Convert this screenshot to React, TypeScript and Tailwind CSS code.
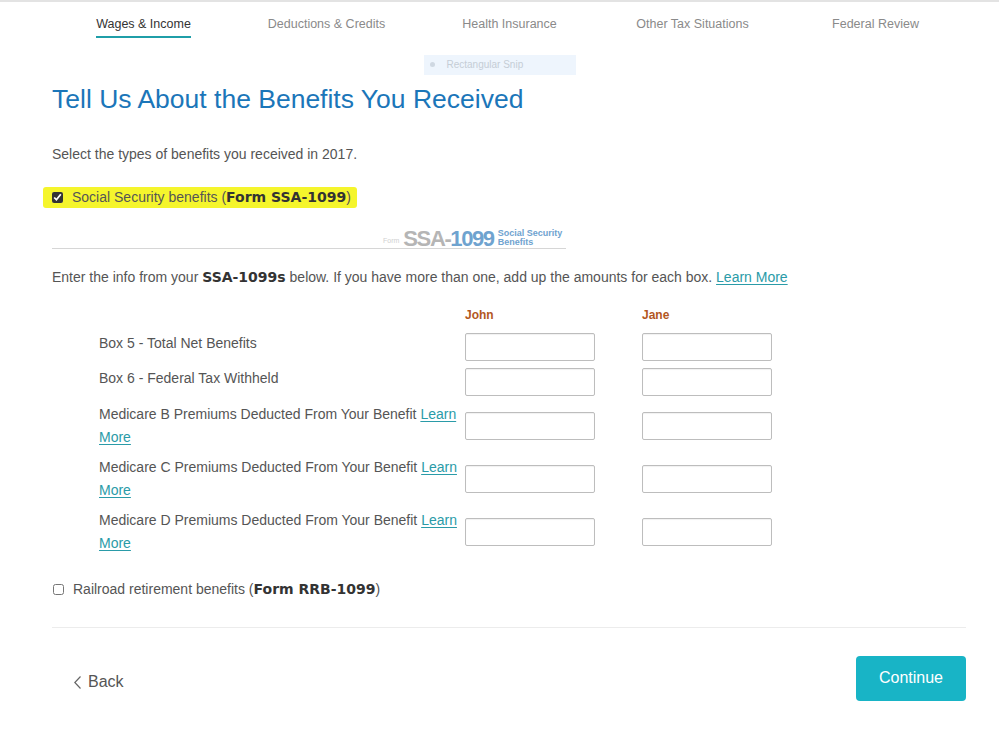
const tabs = ["Wages & Income", "Deductions & Credits", "Health Insurance", "Other Tax Situations", "Federal Review"];

type Row = { label: string; learn?: boolean };

const rows: Row[] = [
  { label: "Box 5 - Total Net Benefits" },
  { label: "Box 6 - Federal Tax Withheld" },
  { label: "Medicare B Premiums Deducted From Your Benefit", learn: true },
  { label: "Medicare C Premiums Deducted From Your Benefit", learn: true },
  { label: "Medicare D Premiums Deducted From Your Benefit", learn: true },
];

function LearnMore() {
  return <a className="text-[#2a9ba8] underline underline-offset-2" href="#">Learn More</a>;
}

function Box() {
  return <input className="h-[28px] w-[130px] rounded-[2px] border border-[#bdbdbd] bg-white shadow-[inset_0_1px_1px_rgba(0,0,0,0.06)]" type="text" />;
}

function Bold({ children }: { children: string }) {
  return <b className="font-['DejaVu_Sans',sans-serif] text-[14px] font-bold text-[#333]">{children}</b>;
}

export default function App() {
  return (
    <div className="min-h-[730px] w-[999px] border-t-2 border-[#e3e3e3] bg-white font-['Liberation_Sans',Arial,sans-serif] text-[14px] text-[#555]">
      <nav className="ml-[52px] grid w-[915px] grid-cols-5 pt-[13px]">
        {tabs.map((tab, i) => (
          <div className="flex justify-center" key={tab}>
            <span className={i === 0 ? "border-b-2 border-[#1f9ea8] pb-[2px] text-[12.5px] text-[#333]" : "pb-[2px] text-[12.5px] text-[#8a8a8a]"}>{tab}</span>
          </div>
        ))}
      </nav>

      <div className="flex justify-center pt-[17px]">
        <div className="flex h-[20px] w-[152px] items-center gap-3 bg-[#eef5fd] pl-[6px] text-[10px] text-[#c5cdd6]">
          <span className="h-[5px] w-[5px] rounded-full bg-[#cfd8e2]" />
          <span>Rectangular Snip</span>
        </div>
      </div>

      <main className="pl-[52px] pr-[33px]">
        <h1 className="pt-[9px] text-[26.5px] leading-[30px] text-[#1b76b9]">Tell Us About the Benefits You Received</h1>

        <p className="pt-[31px] leading-[18px]">Select the types of benefits you received in 2017.</p>

        <label className="-ml-[9px] mt-[24px] flex h-[21px] w-fit items-center gap-[9px] rounded-[3px] bg-[#f5f52c] pl-[9px] pr-[6px]">
          <input className="h-[11px] w-[11px] accent-[#333]" defaultChecked type="checkbox" />
          <span>Social Security benefits (<Bold>Form SSA-1099</Bold>)</span>
        </label>

        <div className="mt-[20px] flex w-[514px] border-b border-[#d6d6d6] pl-[331px]">
          <div className="-mb-[2px] flex items-end gap-[4px]">
            <span className="pb-[3px] text-[7px] text-[#d0d0d0]">Form</span>
            <span className="text-[22px] leading-[22px] font-bold tracking-[-1.4px] text-[#b5b5b5]">SSA-<span className="text-[#6fa3cf]">1099</span></span>
            <span className="pb-[3px] text-[9px] leading-[9px] font-bold text-[#6fa3cf]">Social Security<br />Benefits</span>
          </div>
        </div>

        <p className="pt-[19px] leading-[18px]">
          Enter the info from your <Bold>SSA-1099s</Bold> below. If you have more than one, add up the amounts for each box. <LearnMore />
        </p>

        <div className="pl-[47px] pt-[20px]">
          <div className="flex text-[12px] font-bold text-[#b3571f]">
            <span className="w-[366px]" />
            <span className="w-[177px]">John</span>
            <span>Jane</span>
          </div>
          <div className="flex flex-col gap-[7px] pt-[9px]">
            {rows.map((row) => (
              <div className="flex items-center gap-[4px]" key={row.label}>
                <div className={row.learn ? "w-[362px] leading-[23px]" : "-mt-[6px] w-[362px] leading-[23px]"}>
                  {row.label} {row.learn && <LearnMore />}
                </div>
                <div className="flex gap-[47px]">
                  <Box />
                  <Box />
                </div>
              </div>
            ))}
          </div>
        </div>

        <label className="mt-[26px] flex h-[18px] items-center gap-[9px]">
          <input className="ml-[1px] h-[11px] w-[11px]" type="checkbox" />
          <span>Railroad retirement benefits (<Bold>Form RRB-1099</Bold>)</span>
        </label>

        <div className="mt-[28px] border-t border-[#ececec]" />

        <div className="flex items-center justify-between pt-[28px]">
          <a className="flex items-center gap-[7px] pl-[22px] pt-[8px] text-[16px] text-[#555]" href="#">
            <svg className="h-[13px] w-[7px]" fill="none" stroke="#666" strokeWidth="1.2" viewBox="0 0 7 13">
              <polyline points="6.5,0.5 0.8,6.5 6.5,12.5" />
            </svg>
            Back
          </a>
          <button className="h-[45px] w-[110px] rounded-[4px] bg-[#18b4c6] text-[16px] text-white" type="button">Continue</button>
        </div>
      </main>
    </div>
  );
}
